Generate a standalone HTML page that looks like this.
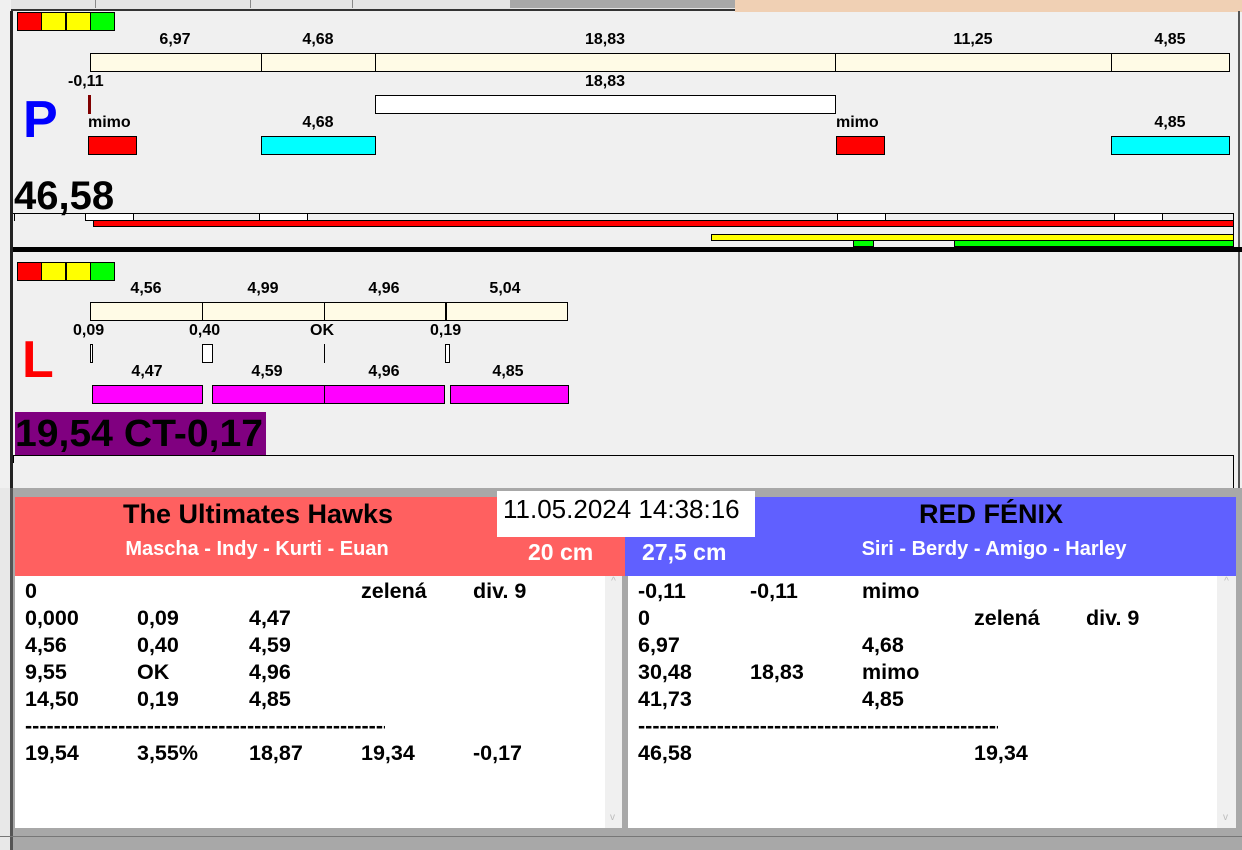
<!DOCTYPE html>
<html><head><meta charset="utf-8"><style>
*{margin:0;padding:0;box-sizing:border-box}
body{width:1242px;height:850px;overflow:hidden;background:#f0f0f0;position:relative;font-family:"Liberation Sans",Arial,sans-serif}
div{position:absolute}
.b{border:1px solid #000}
.lb{font-weight:bold;font-size:16px;color:#000;transform:translateX(-50%);white-space:nowrap;line-height:18px}
.ll{font-weight:bold;font-size:16px;color:#000;white-space:nowrap;line-height:18px}
.cr{background:#fffbe6}
.row{font-weight:bold;font-size:21.5px;line-height:27px;white-space:nowrap;color:#000}
</style></head><body>
<div style="left:0;top:0;width:735px;height:11px;background:#e4e4e4;border-bottom:2px solid #333"></div>
<div style="left:95px;top:0;width:1px;height:8px;background:#888"></div>
<div style="left:250px;top:0;width:1px;height:8px;background:#888"></div>
<div style="left:352px;top:0;width:1px;height:8px;background:#888"></div>
<div style="left:510px;top:0;width:225px;height:8px;background:#a8a8a8"></div>
<div style="left:735px;top:0;width:507px;height:12px;background:#f0d0b4"></div>
<div style="left:0;top:0;width:11px;height:850px;background:#f0f0f0"></div>
<div style="left:10px;top:11px;width:3px;height:478px;background:#222"></div>
<div style="left:1238px;top:11px;width:2px;height:478px;background:#555"></div>

<div class="b" style="left:17px;top:12px;width:25px;height:19px;background:#f00"></div>
<div class="b" style="left:41px;top:12px;width:25px;height:19px;background:#ff0"></div>
<div class="b" style="left:66px;top:12px;width:25px;height:19px;background:#ff0"></div>
<div class="b" style="left:90px;top:12px;width:25px;height:19px;background:#0f0"></div>

<div class="lb" style="left:175px;top:31px">6,97</div>
<div class="lb" style="left:318px;top:31px">4,68</div>
<div class="lb" style="left:605px;top:31px">18,83</div>
<div class="lb" style="left:973px;top:31px">11,25</div>
<div class="lb" style="left:1170px;top:31px">4,85</div>
<div class="b cr" style="left:90px;top:53px;width:172px;height:19px"></div>
<div class="b cr" style="left:261px;top:53px;width:115px;height:19px"></div>
<div class="b cr" style="left:375px;top:53px;width:461px;height:19px"></div>
<div class="b cr" style="left:835px;top:53px;width:277px;height:19px"></div>
<div class="b cr" style="left:1111px;top:53px;width:119px;height:19px"></div>

<div class="ll" style="left:68px;top:73px">-0,11</div>
<div class="lb" style="left:605px;top:73px">18,83</div>
<div style="left:88px;top:95px;width:3px;height:19px;background:#800000"></div>
<div class="b" style="left:375px;top:95px;width:461px;height:19px;background:#fff"></div>
<div style="left:23px;top:90px;font-size:52px;font-weight:bold;color:#0000ff;line-height:60px">P</div>
<div class="ll" style="left:88px;top:114px">mimo</div>
<div class="lb" style="left:318px;top:114px">4,68</div>
<div class="ll" style="left:836px;top:114px">mimo</div>
<div class="lb" style="left:1170px;top:114px">4,85</div>
<div class="b" style="left:88px;top:136px;width:49px;height:19px;background:#f00"></div>
<div class="b" style="left:261px;top:136px;width:115px;height:19px;background:#0ff"></div>
<div class="b" style="left:836px;top:136px;width:49px;height:19px;background:#f00"></div>
<div class="b" style="left:1111px;top:136px;width:119px;height:19px;background:#0ff"></div>
<div style="left:14px;top:173px;font-size:40px;font-weight:bold;line-height:46px">46,58</div>

<div style="left:13px;top:213px;width:1221px;height:1px;background:#000"></div>
<div style="left:1233px;top:213px;width:1px;height:35px;background:#000"></div>
<div style="left:14px;top:213px;width:1px;height:8px;background:#000"></div>
<div class="b" style="left:85px;top:213px;width:49px;height:8px;background:#fff"></div>
<div class="b" style="left:259px;top:213px;width:49px;height:8px;background:#fff"></div>
<div class="b" style="left:837px;top:213px;width:49px;height:8px;background:#fff"></div>
<div class="b" style="left:1114px;top:213px;width:49px;height:8px;background:#fff"></div>
<div class="b" style="left:93px;top:220px;width:1141px;height:7px;background:#f00"></div>
<div class="b" style="left:711px;top:234px;width:523px;height:7px;background:#ff0"></div>
<div class="b" style="left:853px;top:240px;width:21px;height:7px;background:#0f0"></div>
<div class="b" style="left:954px;top:240px;width:280px;height:7px;background:#0f0"></div>
<div style="left:13px;top:247px;width:1229px;height:5px;background:#000"></div>

<div class="b" style="left:17px;top:262px;width:25px;height:19px;background:#f00"></div>
<div class="b" style="left:41px;top:262px;width:25px;height:19px;background:#ff0"></div>
<div class="b" style="left:66px;top:262px;width:25px;height:19px;background:#ff0"></div>
<div class="b" style="left:90px;top:262px;width:25px;height:19px;background:#0f0"></div>
<div class="lb" style="left:146px;top:280px">4,56</div>
<div class="lb" style="left:263px;top:280px">4,99</div>
<div class="lb" style="left:384px;top:280px">4,96</div>
<div class="lb" style="left:505px;top:280px">5,04</div>
<div class="b cr" style="left:90px;top:302px;width:113px;height:19px"></div>
<div class="b cr" style="left:202px;top:302px;width:123px;height:19px"></div>
<div class="b cr" style="left:324px;top:302px;width:122px;height:19px"></div>
<div class="b cr" style="left:445px;top:302px;width:123px;height:19px;border-left-width:2px"></div>
<div class="ll" style="left:73px;top:322px">0,09</div>
<div class="ll" style="left:189px;top:322px">0,40</div>
<div class="ll" style="left:310px;top:322px">OK</div>
<div class="ll" style="left:430px;top:322px">0,19</div>
<div class="b" style="left:90px;top:344px;width:3px;height:19px;background:#fff"></div>
<div class="b" style="left:202px;top:344px;width:11px;height:19px;background:#fff"></div>
<div style="left:324px;top:344px;width:1px;height:19px;background:#000"></div>
<div class="b" style="left:445px;top:344px;width:5px;height:19px;background:#fff"></div>
<div style="left:22px;top:330px;font-size:52px;font-weight:bold;color:#f00;line-height:60px">L</div>
<div class="lb" style="left:147px;top:363px">4,47</div>
<div class="lb" style="left:267px;top:363px">4,59</div>
<div class="lb" style="left:384px;top:363px">4,96</div>
<div class="lb" style="left:508px;top:363px">4,85</div>
<div class="b" style="left:92px;top:385px;width:111px;height:19px;background:#f0f"></div>
<div class="b" style="left:212px;top:385px;width:113px;height:19px;background:#f0f"></div>
<div class="b" style="left:324px;top:385px;width:121px;height:19px;background:#f0f"></div>
<div class="b" style="left:450px;top:385px;width:119px;height:19px;background:#f0f"></div>
<div style="left:15px;top:412px;width:251px;height:43px;background:#800080"></div>
<div style="left:15px;top:411px;font-size:38px;font-weight:bold;line-height:46px;white-space:nowrap;transform:scaleX(1.03);transform-origin:left">19,54 CT-0,17</div>
<div style="left:13px;top:455px;width:1221px;height:1px;background:#000"></div>
<div style="left:13px;top:455px;width:1px;height:8px;background:#000"></div>
<div style="left:1233px;top:455px;width:1px;height:33px;background:#000"></div>

<div style="left:0;top:488px;width:1242px;height:362px;background:#a8a8a8"></div>
<div style="left:0;top:488px;width:11px;height:362px;background:#e8e8e8"></div>
<div style="left:10px;top:488px;width:3px;height:362px;background:#555"></div>
<div style="left:15px;top:497px;width:610px;height:79px;background:#ff6060"></div>
<div style="left:625px;top:497px;width:611px;height:79px;background:#6060ff"></div>
<div style="left:258px;top:497px;transform:translateX(-50%);font-size:27px;font-weight:bold;white-space:nowrap;line-height:34px">The Ultimates Hawks</div>
<div style="left:257px;top:536px;transform:translateX(-50%);font-size:20px;font-weight:bold;color:#fff;white-space:nowrap;line-height:26px">Mascha - Indy - Kurti - Euan</div>
<div style="left:528px;top:538px;font-size:23px;font-weight:bold;color:#fff;line-height:28px">20 cm</div>
<div style="left:991px;top:497px;transform:translateX(-50%);font-size:27px;font-weight:bold;white-space:nowrap;line-height:34px">RED FÉNIX</div>
<div style="left:994px;top:536px;transform:translateX(-50%);font-size:20px;font-weight:bold;color:#fff;white-space:nowrap;line-height:26px">Siri - Berdy - Amigo - Harley</div>
<div style="left:642px;top:538px;font-size:23px;font-weight:bold;color:#fff;line-height:28px">27,5 cm</div>
<div style="left:497px;top:491px;width:258px;height:46px;background:#fff"></div>
<div style="left:503px;top:494px;font-size:26px;line-height:30px;white-space:nowrap">11.05.2024 14:38:16</div>

<div style="left:15px;top:576px;width:590px;height:252px;background:#fff"></div>
<div style="left:605px;top:576px;width:17px;height:252px;background:#f0f0f0;color:#bbb;font-size:10px;text-align:center">^<div style="left:5px;top:236px">v</div></div>
<div style="left:628px;top:576px;width:589px;height:252px;background:#fff"></div>
<div style="left:1217px;top:576px;width:19px;height:252px;background:#f0f0f0;color:#bbb;font-size:10px;text-align:center">^<div style="left:6px;top:236px">v</div></div>
<div style="left:0;top:836px;width:1242px;height:1px;background:#777"></div>

<div class="row" style="left:0;top:578px;width:620px;height:260px">
<div style="left:25px;top:0">0</div><div style="left:361px;top:0">zelená</div><div style="left:473px;top:0">div. 9</div>
<div style="left:25px;top:27px">0,000</div><div style="left:137px;top:27px">0,09</div><div style="left:249px;top:27px">4,47</div>
<div style="left:25px;top:54px">4,56</div><div style="left:137px;top:54px">0,40</div><div style="left:249px;top:54px">4,59</div>
<div style="left:25px;top:81px">9,55</div><div style="left:137px;top:81px">OK</div><div style="left:249px;top:81px">4,96</div>
<div style="left:25px;top:108px">14,50</div><div style="left:137px;top:108px">0,19</div><div style="left:249px;top:108px">4,85</div>
<div style="left:25px;top:135px;width:360px;overflow:hidden">--------------------------------------------------------</div>
<div style="left:25px;top:162px">19,54</div><div style="left:137px;top:162px">3,55%</div><div style="left:249px;top:162px">18,87</div><div style="left:361px;top:162px">19,34</div><div style="left:473px;top:162px">-0,17</div>
</div>
<div class="row" style="left:613px;top:578px;width:620px;height:260px">
<div style="left:25px;top:0">-0,11</div><div style="left:137px;top:0">-0,11</div><div style="left:249px;top:0">mimo</div>
<div style="left:25px;top:27px">0</div><div style="left:361px;top:27px">zelená</div><div style="left:473px;top:27px">div. 9</div>
<div style="left:25px;top:54px">6,97</div><div style="left:249px;top:54px">4,68</div>
<div style="left:25px;top:81px">30,48</div><div style="left:137px;top:81px">18,83</div><div style="left:249px;top:81px">mimo</div>
<div style="left:25px;top:108px">41,73</div><div style="left:249px;top:108px">4,85</div>
<div style="left:25px;top:135px;width:360px;overflow:hidden">--------------------------------------------------------</div>
<div style="left:25px;top:162px">46,58</div><div style="left:361px;top:162px">19,34</div>
</div>
</body></html>
